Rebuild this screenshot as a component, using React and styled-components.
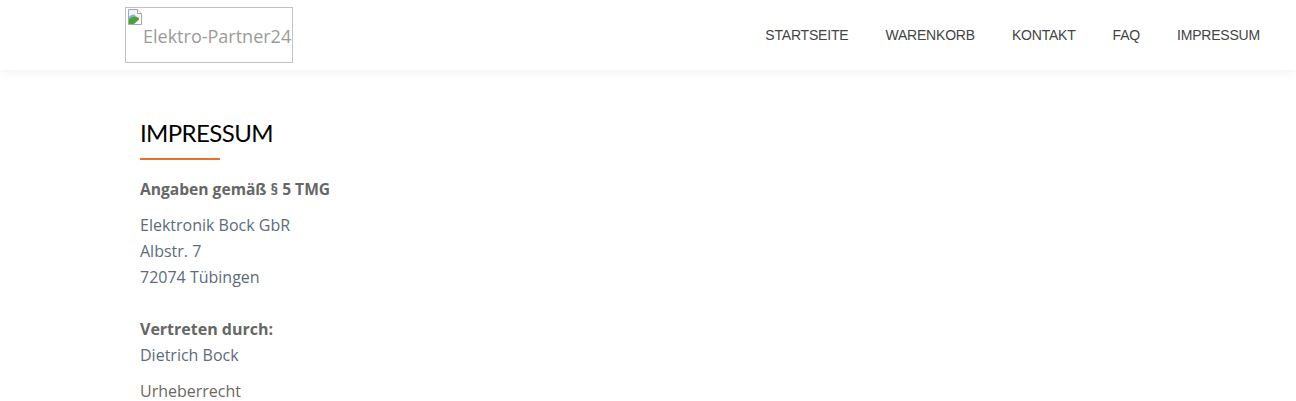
import React from "react";
import styled, { createGlobalStyle } from "styled-components";

const GlobalStyle = createGlobalStyle`
  html, body {
    margin: 0;
    padding: 0;
    background: #fff;
  }
  body {
    font-family: "Open Sans", "Liberation Sans", sans-serif;
  }
`;

const links = ["Startseite", "Warenkorb", "Kontakt", "FAQ", "Impressum"];

export default function App() {
  return (
    <>
      <GlobalStyle />
      <Header>
        <Logo title="Elektro-Partner24">
          <BrokenIcon width="16" height="16" viewBox="0 0 16 16">
            <path d="M1.5 0.5h9l4 4v11h-13z" fill="#f4f4f4" stroke="#a8a8a8" />
            <path d="M10.5 0.5v4h4" fill="#fff" stroke="#a8a8a8" />
            <path d="M2 10c2-3 5-4 8-2l2 1v6H2z" fill="#4aa33a" />
            <path d="M2 9c2-2 4-3 6-2" stroke="#7fb5e0" strokeWidth="2" fill="none" />
            <path d="M7 15l7-6v6z" fill="#fff" />
          </BrokenIcon>
          <AltText>Elektro-Partner24</AltText>
        </Logo>
        <Links>
          {links.map((l) => (
            <li key={l}>
              <a href="#">{l}</a>
            </li>
          ))}
        </Links>
      </Header>
      <Main>
        <Title>Impressum</Title>
        <Underline />
        <Lead>Angaben gemäß § 5 TMG</Lead>
        <Para tone="blue" spaced>
          Elektronik Bock GbR
          <br />
          Albstr. 7
          <br />
          72074 Tübingen
        </Para>
        <Para tone="blue">
          <strong>Vertreten durch:</strong>
          <br />
          Dietrich Bock
        </Para>
        <Para>Urheberrecht</Para>
      </Main>
    </>
  );
}

const Header = styled.header`
  display: flex;
  justify-content: space-between;
  align-items: center;
  height: 70px;
  padding: 0 36px 0 125px;
  background: #fff;
  box-shadow: 0 2px 10px rgba(0, 0, 0, 0.06);
  position: relative;
  z-index: 2;
`;

const Logo = styled.div`
  width: 164px;
  height: 52px;
  border: 1px solid #c2c2c2;
  padding: 1px;
  box-sizing: content-box;
  display: flex;
  flex-direction: column;
`;

const BrokenIcon = styled.svg`
  display: block;
`;

const AltText = styled.span`
  padding-left: 16px;
  margin-top: -1px;
  font-family: "Open Sans", sans-serif;
  font-size: 18px;
  line-height: 24px;
  color: #9b9b9b;
  white-space: nowrap;
`;

const Links = styled.ul`
  display: flex;
  list-style: none;
  margin: -2px 0 0;
  padding: 0;
  gap: 37px;
  li a {
    font-family: "Liberation Sans", Arial, sans-serif;
    font-size: 14px;
    letter-spacing: -0.2px;
    color: #444;
    text-decoration: none;
    text-transform: uppercase;
  }
`;

const Main = styled.main`
  padding: 47px 0 0 140px;
`;

const Title = styled.h1`
  margin: 0;
  font-family: "Lato", "Open Sans", sans-serif;
  font-weight: 400;
  font-size: 24px;
  letter-spacing: -0.6px;
  line-height: 32px;
  color: #000;
  text-transform: uppercase;
`;

const Underline = styled.div`
  width: 80px;
  height: 2px;
  background: #e8702a;
  margin: 9px 0 16px;
`;

const Lead = styled.p`
  margin: 0 0 10px;
  font-size: 15.6px;
  line-height: 26px;
  font-weight: 700;
  color: #666;
`;

const Para = styled.p`
  margin: 0 0 ${({ spaced }) => (spaced ? "26px" : "10px")};
  font-size: 16px;
  line-height: 26px;
  color: ${({ tone }) => (tone === "blue" ? "#5d6b7c" : "#6e6660")};
  strong {
    color: #666;
    font-weight: 700;
  }
`;
